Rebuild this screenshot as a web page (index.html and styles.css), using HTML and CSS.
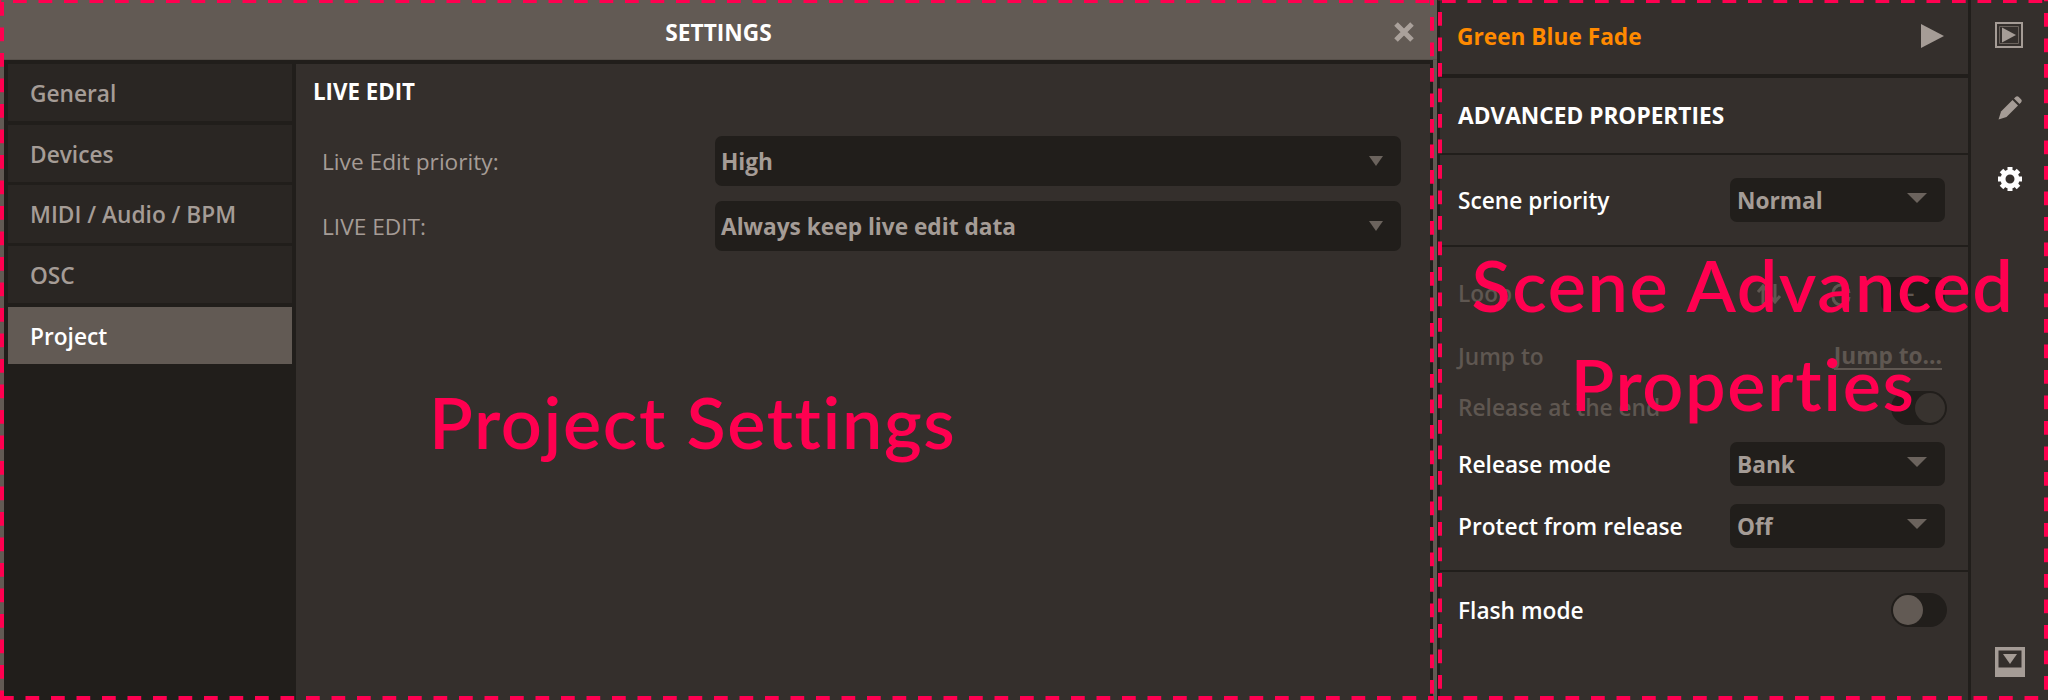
FILE: index.html
```html
<!DOCTYPE html>
<html lang="en">
<head>
<meta charset="utf-8">
<title>Settings</title>
<link rel="stylesheet" href="styles.css">
</head>
<body>
<div class="app">
  <section class="settings">
    <header class="settings-head">
      <h1 class="settings-title">SETTINGS</h1>
      <svg class="close" viewBox="0 0 22 22"><path d="M3 3 L19 19 M19 3 L3 19"/></svg>
    </header>
    <div class="settings-body">
      <nav class="side">
        <div class="side-item">General</div>
        <div class="side-item">Devices</div>
        <div class="side-item">MIDI / Audio / BPM</div>
        <div class="side-item">OSC</div>
        <div class="side-item active">Project</div>
      </nav>
      <main class="pane">
        <h2 class="pane-title">LIVE EDIT</h2>
        <div class="form">
          <div class="form-label">Live Edit priority:</div>
          <div class="select wide"><span>High</span><i class="caret small"></i></div>
          <div class="form-label">LIVE EDIT:</div>
          <div class="select wide"><span>Always keep live edit data</span><i class="caret small"></i></div>
        </div>
      </main>
    </div>
  </section>

  <section class="scene">
    <div class="scene-col">
      <div class="scene-top">
        <span class="scene-name">Green Blue Fade</span>
        <svg class="play" viewBox="0 0 23 24"><path d="M0 0 L23 12 L0 24Z"/></svg>
      </div>
      <div class="scene-head">ADVANCED PROPERTIES</div>
      <div class="group one">
        <div class="row">
          <span class="row-label">Scene priority</span>
          <div class="select"><span>Normal</span><i class="caret"></i></div>
        </div>
      </div>
      <div class="group many">
        <div class="row short off">
          <span class="row-label">Loop</span>
          <div class="loop-ctl">
            <svg class="loop-icon" viewBox="0 0 28 24"><path d="M8 22 V5 M3 10 L8 4 L13 10 M20 2 V19 M15 14 L20 20 L25 14"/></svg>
            <svg class="loop-icon arc" viewBox="0 0 24 24"><path d="M4 11 A8 8 0 0 1 20 11 M4 15 A8 8 0 0 0 20 15"/></svg>
            <div class="loop-select">-</div>
          </div>
        </div>
        <div class="row short off jump">
          <span class="row-label">Jump to</span>
          <span class="jump-link">Jump to...</span>
        </div>
        <div class="row short off">
          <span class="row-label">Release at the end</span>
          <div class="toggle on"><i class="knob"></i></div>
        </div>
        <div class="row">
          <span class="row-label">Release mode</span>
          <div class="select"><span>Bank</span><i class="caret"></i></div>
        </div>
        <div class="row">
          <span class="row-label">Protect from release</span>
          <div class="select"><span>Off</span><i class="caret"></i></div>
        </div>
      </div>
      <div class="group flash">
        <div class="row short">
          <span class="row-label">Flash mode</span>
          <div class="toggle"><i class="knob"></i></div>
        </div>
      </div>
    </div>
    <aside class="rail">
      <div class="rail-icons">
        <svg class="ico-box" viewBox="0 0 28 26"><path class="frame" d="M1 1 H27 V25 H1Z"/><path class="inner" d="M4.5 4.5 H23.5 V21.5 H4.5Z"/><path class="tri" d="M7 5.5 L21 13 L7 20.5Z"/></svg>
        <svg class="ico-pen" viewBox="0 0 24 24"><path d="M0.5 23.5 L3 15.5 L14.5 4 L20 9.5 L8.5 21Z"/><path d="M16 2.5 L17.5 1 A2.4 2.4 0 0 1 20.8 1 L23 3.2 A2.4 2.4 0 0 1 23 6.5 L21.5 8Z"/></svg>
        <svg class="ico-gear" viewBox="0 0 26 26">
          <circle class="gear-ring" cx="13" cy="13" r="7"/>
          <path class="gear-teeth" d="M13 1 V5 M13 21 V25 M1 13 H5 M21 13 H25 M4.5 4.5 L7.4 7.4 M18.6 18.6 L21.5 21.5 M21.5 4.5 L18.6 7.4 M7.4 18.6 L4.5 21.5"/>
        </svg>
      </div>
      <svg class="ico-drop" viewBox="0 0 30 30"><path class="drop-bg" d="M0 0 H30 V30 H0Z"/><path class="drop-win" d="M3.5 3.5 H26.5 V20.5 H3.5Z"/><path class="drop-tri" d="M8 7 H22 L15 17Z"/></svg>
    </aside>
  </section>
</div>

<div class="note note-left">Project Settings</div>
<div class="note note-right">Scene Advanced<br>Properties</div>
<div class="frame-mark frame-left"></div>
<div class="frame-mark frame-right"></div>
</body>
</html>
```

FILE: styles.css
```css
* { box-sizing: border-box; }
html, body { margin: 0; height: 700px; overflow: hidden; }
body {
  position: relative;
  background: #342f2c;
  font-family: "Open Sans", "Noto Sans", sans-serif;
  font-weight: 600;
  font-size: 22.7px;
  color: #fff;
}
.app { display: flex; height: 700px; }

/* settings panel */
.settings {
  width: 1437px;
  flex: none;
  display: flex;
  flex-direction: column;
  border-left: 4px solid #625a54;
  border-right: 4px solid #625a54;
  background: #211e1b;
}
.settings-head {
  height: 60px;
  margin: 0 -4px;
  flex: none;
  display: flex;
  align-items: center;
  justify-content: center;
  position: relative;
  background: #625a54;
  border-bottom: 1px solid #57504a;
}
.settings-title { margin: 0; font-size: 22.7px; font-weight: 700; line-height: 1; position: relative; top: 4px; }
.close {
  position: absolute;
  right: 22px;
  top: 21px;
  width: 22px;
  height: 22px;
  fill: none;
  stroke: #aaa19b;
  stroke-width: 5;
}
.settings-body { flex: 1; display: flex; padding-top: 4px; padding-right: 3px; min-height: 0; }
.side {
  width: 292px;
  flex: none;
  padding: 0 4px;
  display: flex;
  flex-direction: column;
  gap: 3.5px;
}
.side-item {
  height: 57.2px;
  padding-left: 22px;
  padding-top: 2px;
  display: flex;
  align-items: center;
  background: #2a2623;
  color: #a59c96;
}
.side-item.active { background: #625a54; color: #fff; }
.pane { flex: 1; background: #342f2c; padding: 0 29px 0 17px; }
.pane-title { margin: 0; height: 54px; line-height: 56px; font-size: 22.3px; font-weight: 700; }
.form {
  margin: 18px 0 0 9px;
  display: grid;
  grid-template-columns: 393px 1fr;
  row-gap: 15px;
  align-items: center;
}
.form-label { font-weight: 400; color: #a59c96; }

/* select */
.select {
  width: 215px;
  height: 44px;
  padding: 0 18px 0 7px;
  display: flex;
  align-items: center;
  justify-content: space-between;
  background: #211e1b;
  border-radius: 7px;
  color: #a59c96;
  font-weight: 700;
}
.select.wide { width: auto; height: 50px; padding: 0 18px 0 6px; }
.caret {
  width: 0;
  height: 0;
  border-left: 10px solid transparent;
  border-right: 10px solid transparent;
  border-top: 10px solid #6b635d;
  position: relative;
  top: -2px;
}
.caret.small { border-left-width: 7.5px; border-right-width: 7.5px; top: 0; }

/* scene column */
.scene {
  flex: 1;
  display: flex;
  padding-left: 1px;
  background: #211e1b;
}
.scene-col {
  width: 531px;
  flex: none;
  margin-left: 2px;
  display: flex;
  flex-direction: column;
  background: #342f2c;
  border-right: 3px solid #211e1b;
}
.scene-top {
  height: 78px;
  flex: none;
  padding: 0 24px 2px 17px;
  display: flex;
  align-items: center;
  justify-content: space-between;
  border-bottom: 4px solid #211e1b;
}
.scene-name { color: #ff8a00; font-weight: 700; }
.play { width: 23px; height: 24px; fill: #a59c96; }
.scene-head {
  height: 77px;
  flex: none;
  padding-left: 18px;
  display: flex;
  align-items: center;
  border-bottom: 2px solid #211e1b;
  font-weight: 700;
}
.group { padding: 0 23px 0 18px; flex: none; border-bottom: 2px solid #211e1b; }
.group.one { height: 92px; padding-top: 23px; }
.group.many {
  height: 325px;
  padding-top: 30px;
  display: flex;
  flex-direction: column;
  gap: 17px;
}
.group.flash { border-bottom: 0; padding-top: 21px; flex: 1; }
.row {
  height: 44px;
  display: flex;
  align-items: center;
  justify-content: space-between;
}
.row.short { height: 34px; }
.row.jump { margin-top: 12px; }
.row + .row:last-child { margin-top: 1px; }
.off .row-label { color: #5f5751; padding-bottom: 2px; }
.jump-link {
  color: #5f5751;
  font-weight: 700;
  border-bottom: 2px solid #5f5751;
  line-height: 24px;
  margin-right: 3px;
}

/* loop */
.loop-ctl { display: flex; align-items: center; }
.loop-icon { width: 28px; height: 24px; fill: none; stroke: #5f5751; stroke-width: 3; margin-right: 46px; }
.loop-icon.arc { width: 24px; margin-right: 28px; }
.loop-select {
  width: 64px;
  height: 34px;
  padding-left: 26px;
  background: #211e1b;
  border-radius: 7px;
  color: #5f5751;
  line-height: 32px;
}

/* toggle */
.toggle {
  width: 56px;
  height: 34px;
  margin-right: -2px;
  padding: 2px;
  background: #211e1b;
  border-radius: 17px;
  display: flex;
}
.knob { width: 30px; height: 30px; border-radius: 50%; background: #625a54; }
.toggle.on { justify-content: flex-end; }
.toggle.on .knob { background: #38332f; }

/* rail */
.rail {
  flex: 1;
  background: #342f2c;
  display: flex;
  flex-direction: column;
  align-items: center;
  padding: 22px 0 23px;
  justify-content: space-between;
}
.rail-icons { display: flex; flex-direction: column; align-items: center; }
.ico-box { width: 28px; height: 26px; margin-left: -1px; }
.frame { fill: none; stroke: #a59c96; stroke-width: 2; }
.inner { fill: none; stroke: #6b635d; stroke-width: 1; }
.tri { fill: #a59c96; }
.ico-pen { width: 24px; height: 24px; margin-top: 48px; fill: #a59c96; }
.ico-gear { width: 26px; height: 26px; margin-top: 46px; }
.gear-ring { fill: none; stroke: #fff; stroke-width: 5; }
.gear-teeth { fill: none; stroke: #fff; stroke-width: 5; }
.ico-drop { width: 30px; height: 30px; }
.drop-bg { fill: #a59c96; }
.drop-win { fill: #342f2c; }
.drop-tri { fill: #a59c96; }

/* annotations over the screenshot */
.note {
  position: absolute;
  color: #ff0050;
  font-family: Lato, sans-serif;
  font-weight: 600;
  font-size: 72px;
  letter-spacing: 1.6px;
  line-height: 99px;
  white-space: nowrap;
  font-variant-ligatures: none;
}
.note-left { left: 429px; top: 372px; }
.note-right { left: 1443px; top: 235px; width: 600px; text-align: center; }

.frame-mark {
  position: absolute;
  top: 0;
  height: 700px;
  --h: linear-gradient(90deg, #ff0050 14px, transparent 14px);
  --v: linear-gradient(180deg, #ff0050 14px, transparent 14px);
  background:
    var(--h) var(--top) 0 / 25.5px 3px repeat-x,
    var(--h) 0 100% / 25.5px 4px repeat-x,
    var(--v) 0 var(--left) / 4px 25.5px repeat-y,
    var(--v) 100% var(--right) / 4px 25.5px repeat-y;
}
.frame-left { left: 0; width: 1434px; --top: 13px; --left: 2px; --right: 17px; }
.frame-right { left: 1438px; width: 610px; --top: 4px; --left: 12px; --right: 13px; }
```
